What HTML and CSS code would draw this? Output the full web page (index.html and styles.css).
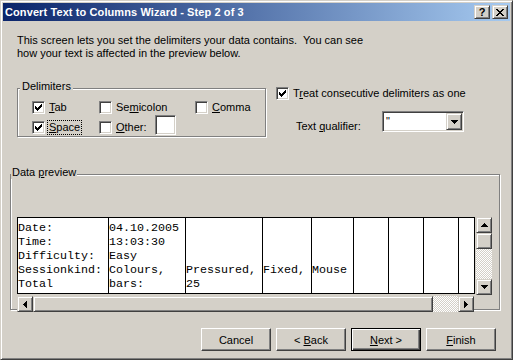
FILE: index.html
```
<!DOCTYPE html>
<html>
<head>
<meta charset="utf-8">
<link rel="stylesheet" href="styles.css">
</head>
<body>
<div class="window">
  <div class="titlebar">
    <span class="title">Convert Text to Columns Wizard - Step 2 of 3</span>
    <div class="caption-btns">
      <span class="raised cap-btn help">?</span>
      <span class="raised cap-btn"><svg width="8" height="7" viewBox="0 0 8 7"><path d="M0 0h2v1H0zM6 0h2v1H6zM1 1h2v1H1zM5 1h2v1H5zM2 2h4v1H2zM3 3h2v1H3zM2 4h4v1H2zM1 5h2v1H1zM5 5h2v1H5zM0 6h2v1H0zM6 6h2v1H6z"/></svg></span>
    </div>
  </div>
  <div class="body">
    <p class="intro">This screen lets you set the delimiters your data contains.&nbsp; You can see<br>how your text is affected in the preview below.</p>
    <div class="options">
      <div class="group delimiters">
        <span class="group-label">Delimiters</span>
        <div class="delim-grid">
          <div class="check"><span class="cb"><svg width="7" height="7" viewBox="0 0 7 7"><path d="M0 2h1v3H0zM1 3h1v3H1zM2 4h1v3H2zM3 3h1v3H3zM4 2h1v3H4zM5 1h1v3H5zM6 0h1v3H6z"/></svg></span><span class="lbl"><u>T</u>ab</span></div>
          <div class="check"><span class="cb"></span><span class="lbl">Se<u>m</u>icolon</span></div>
          <div class="check"><span class="cb"></span><span class="lbl"><u>C</u>omma</span></div>
          <div class="check"><span class="cb"><svg width="7" height="7" viewBox="0 0 7 7"><path d="M0 2h1v3H0zM1 3h1v3H1zM2 4h1v3H2zM3 3h1v3H3zM4 2h1v3H4zM5 1h1v3H5zM6 0h1v3H6z"/></svg></span><span class="lbl focus"><u>S</u>pace</span></div>
          <div class="check"><span class="cb"></span><span class="lbl other-lbl"><u>O</u>ther:</span><span class="sunken textfield"></span></div>
        </div>
      </div>
      <div class="right-opts">
        <div class="check"><span class="cb"><svg width="7" height="7" viewBox="0 0 7 7"><path d="M0 2h1v3H0zM1 3h1v3H1zM2 4h1v3H2zM3 3h1v3H3zM4 2h1v3H4zM5 1h1v3H5zM6 0h1v3H6z"/></svg></span><span class="lbl">T<u>r</u>eat consecutive delimiters as one</span></div>
        <div class="qual-row">
          <span class="qual-label">Text <u>q</u>ualifier:</span>
          <div class="sunken combo">
            <span class="combo-text">"</span>
            <span class="raised combo-btn"><svg width="7" height="4" viewBox="0 0 7 4"><path d="M0 0h7v1H6v1H5v1H4v1H3V3H2V2H1V1H0z"/></svg></span>
          </div>
        </div>
      </div>
    </div>
    <div class="group preview">
      <span class="group-label">Data <u>p</u>review</span>
      <div class="grid">
        <div class="table">
          <div class="col c1">Date:
Time:
Difficulty:
Sessionkind:
Total</div>
          <div class="col c2">04.10.2005
13:03:30
Easy
Colours,
bars:</div>
          <div class="col c3">


Pressured,
25</div>
          <div class="col c4">


Fixed,</div>
          <div class="col c5">


Mouse</div>
          <div class="col c6"></div>
          <div class="col c7"></div>
          <div class="col c8"></div>
          <div class="col c9"></div>
        </div>
        <div class="vscroll">
          <span class="raised sbtn"><svg width="7" height="4" viewBox="0 0 7 4"><path d="M3 0h1v1h1v1h1v1h1v1H0V3h1V2h1V1h1z"/></svg></span>
          <span class="raised vthumb"></span>
          <span class="track"></span>
          <span class="raised sbtn"><svg width="7" height="4" viewBox="0 0 7 4"><path d="M0 0h7v1H6v1H5v1H4v1H3V3H2V2H1V1H0z"/></svg></span>
        </div>
        <div class="hscroll">
          <span class="raised sbtn"><svg width="4" height="7" viewBox="0 0 4 7"><path d="M4 0H3v1H2v1H1v1H0v1h1v1h1v1h1v1h1z"/></svg></span>
          <span class="raised hthumb"></span>
          <span class="track"></span>
          <span class="raised sbtn"><svg width="4" height="7" viewBox="0 0 4 7"><path d="M0 0h1v1h1v1h1v1h1v1H3v1H2v1H1v1H0z"/></svg></span>
        </div>
      </div>
    </div>
    <div class="buttons">
      <span class="btn"><span>Cancel</span></span>
      <span class="btn"><span>&lt; <u>B</u>ack</span></span>
      <span class="btn default"><span><u>N</u>ext &gt;</span></span>
      <span class="btn"><span><u>F</u>inish</span></span>
    </div>
  </div>
</div>
</body>
</html>
```
FILE: styles.css
```
* { box-sizing: border-box; }
html, body { margin: 0; padding: 0; }
body {
  background: #d4d0c8;
  font: 11px "Liberation Sans", Arial, sans-serif;
  color: #000;
  width: 513px;
  height: 360px;
  overflow: hidden;
}
.window {
  width: 513px;
  height: 360px;
  border: 1px solid;
  border-color: #d4d0c8 #404040 #404040 #d4d0c8;
  box-shadow: inset 1px 1px #fff, inset -1px -1px #808080;
  padding: 2px;
  display: flex;
  flex-direction: column;
}
.titlebar {
  height: 18px;
  flex: none;
  background: linear-gradient(to right, #0a246a, #a6caf0);
  display: flex;
  align-items: center;
  justify-content: space-between;
  padding: 0 2px;
}
.title {
  color: #fff;
  font-weight: bold;
  font-size: 11px;
  letter-spacing: 0.1px;
  white-space: nowrap;
}
.caption-btns { display: flex; gap: 2px; }
.raised {
  border: 1px solid;
  border-color: #d4d0c8 #404040 #404040 #d4d0c8;
  box-shadow: inset 1px 1px #fff, inset -1px -1px #808080;
  background: #d4d0c8;
  display: flex;
  align-items: center;
  justify-content: center;
}
.sunken {
  border: 1px solid;
  border-color: #808080 #fff #fff #808080;
  box-shadow: inset 1px 1px #404040, inset -1px -1px #d4d0c8;
  background: #fff;
}
.cap-btn { width: 16px; height: 14px; }
.help { font-weight: bold; font-size: 11px; line-height: 12px; }
svg { display: block; shape-rendering: crispEdges; }
svg path { fill: #000; }

.body {
  padding: 0 14px;
  display: flex;
  flex-direction: column;
}
.intro {
  margin: 13px 0 0;
  line-height: 13px;
  white-space: nowrap;
}
.options {
  display: flex;
  margin-top: 28px;
  height: 49px;
}
.group {
  position: relative;
  border: 1px solid #808080;
  box-shadow: inset 1px 1px #fff, 1px 1px #fff;
}
.group-label {
  position: absolute;
  top: -9px;
  left: 2px;
  padding: 0 2px;
  background: #d4d0c8;
  line-height: 13px;
}
.delimiters {
  width: 249px;
  height: 49px;
  padding: 8px 0 0 14px;
}
.delim-grid {
  display: grid;
  grid-template-columns: 67px 96px auto;
  grid-template-rows: 20px 20px;
}
.check {
  display: flex;
  align-items: center;
}
.cb {
  width: 13px;
  height: 13px;
  flex: none;
  border: 1px solid;
  border-color: #808080 #fff #fff #808080;
  box-shadow: inset 1px 1px #404040, inset -1px -1px #d4d0c8;
  background: #fff;
  padding: 2px;
}
.lbl {
  margin-left: 3px;
  padding: 0 1px;
  line-height: 13px;
  white-space: nowrap;
}
.focus { outline: 1px dotted #000; }
.other-lbl { width: 40px; }
.textfield {
  width: 21px;
  height: 20px;
  align-self: flex-start;
  margin-top: -2px;
}
.right-opts {
  margin-left: 10px;
  margin-top: -1px;
  display: flex;
  flex-direction: column;
}
.qual-row {
  display: flex;
  align-items: flex-start;
  margin-top: 11px;
  padding-left: 20px;
}
.qual-label {
  width: 86px;
  margin-top: 9px;
  line-height: 13px;
}
.combo {
  width: 82px;
  height: 21px;
  padding: 1px;
  display: flex;
  align-items: center;
  justify-content: space-between;
}
.combo-text { padding-left: 2px; line-height: 13px; }
.combo-btn { width: 16px; height: 17px; }

.preview {
  margin-top: 37px;
  margin-left: -7px;
  width: 490px;
  height: 136px;
  padding: 42px 0 0 6px;
}
.preview .group-label { left: 0; padding: 0 1px; }
.grid {
  display: grid;
  grid-template-columns: 458px 16px;
  grid-template-rows: 78px 16px;
  column-gap: 1px;
  row-gap: 1px;
}
.table {
  height: 77px;
  border: 1px solid #000;
  background: #fff;
  display: flex;
}
.col {
  flex: none;
  height: 100%;
  padding-top: 3px;
  white-space: pre;
  overflow: hidden;
  color: #000;
  font: 11.67px/14px "Liberation Mono", "Courier New", monospace;
}
.col + .col { border-left: 1px solid #000; }
.c1 { width: 90px; }
.c2, .c3 { width: 77px; }
.c4 { width: 49px; }
.c5 { width: 42px; }
.c6, .c7, .c8 { width: 35px; }
.c9 { width: 16px; }
.vscroll {
  display: flex;
  flex-direction: column;
}
.hscroll {
  grid-column: 1;
  width: 457px;
  display: flex;
}
.sbtn { width: 16px; height: 16px; flex: none; }
.vthumb { width: 16px; height: 16px; flex: none; }
.hthumb { width: 400px; height: 16px; flex: none; }
.track {
  flex: 1;
  background: repeating-conic-gradient(#fff 0 25%, #d4d0c8 0 50%) 0 0 / 2px 2px;
}
.buttons {
  margin-top: 18px;
  display: flex;
  justify-content: flex-end;
  gap: 5px;
}
.btn {
  width: 70px;
  height: 23px;
  display: flex;
  align-items: center;
  justify-content: center;
  border: 1px solid;
  border-color: #fff #404040 #404040 #fff;
  box-shadow: inset -1px -1px #808080;
  background: #d4d0c8;
  white-space: pre;
}
.btn.default {
  border-color: #000;
  box-shadow: inset 1px 1px #fff, inset -1px -1px #404040, inset -2px -2px #808080;
}
```
